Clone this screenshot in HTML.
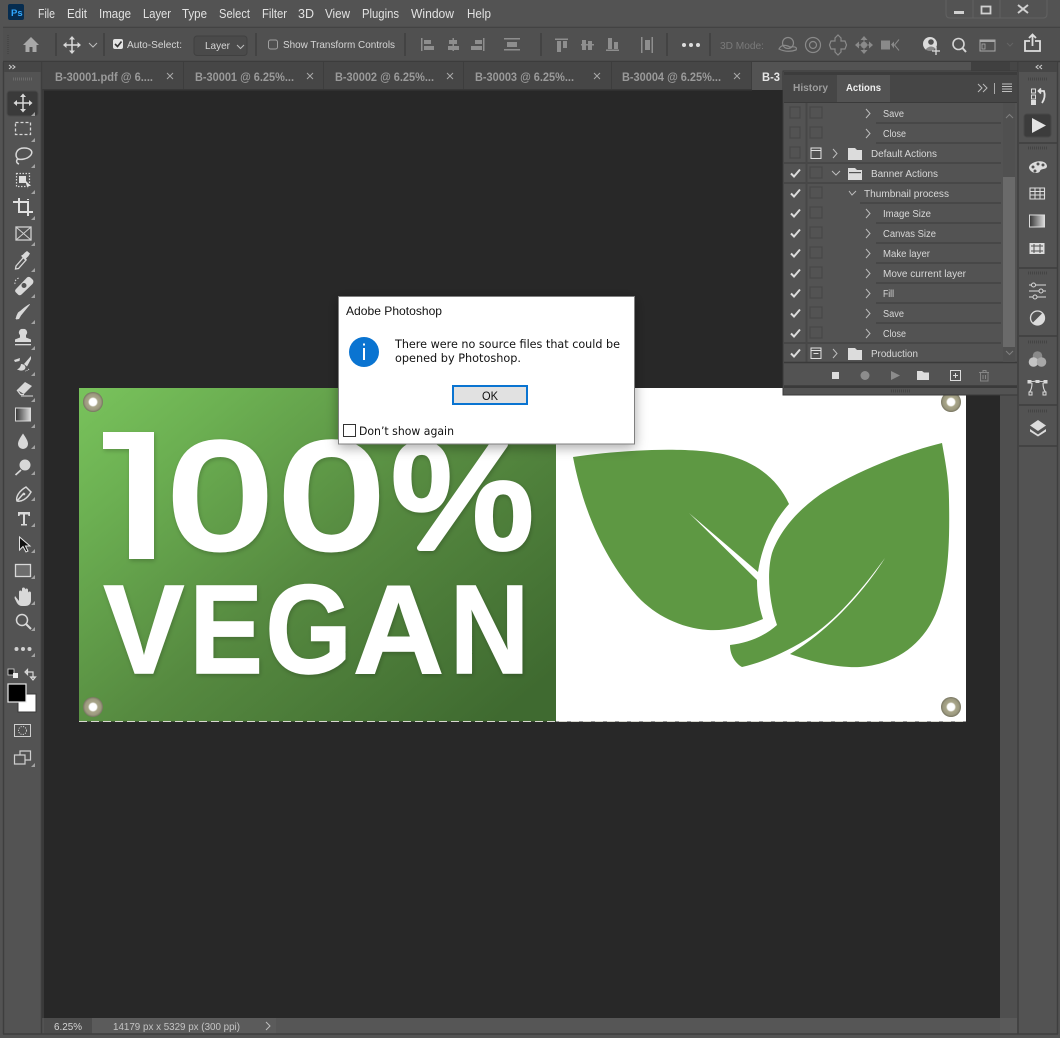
<!DOCTYPE html>
<html lang="en"><head><meta charset="utf-8"><title>Adobe Photoshop</title>
<style>
html,body{margin:0;padding:0;background:#535353;width:1060px;height:1038px;overflow:hidden}
svg{display:block;font-family:"Liberation Sans",sans-serif}
.m{font-size:12.5px;fill:#e2e2e2}
.o{font-size:10.5px;fill:#d6d6d6}
.t{font-size:11.5px;fill:#9a9a9a;font-weight:bold}
.a{font-size:10px;fill:#d8d8d8}
.d{font-size:12px;fill:#111}
.dv{font-size:11.5px;fill:#111;font-family:"DejaVu Sans",sans-serif}
.big{fill:#fff;stroke:#fff;stroke-linejoin:round}
.bg{fill:#fff;font-weight:bold;stroke:#fff;stroke-width:1.500px}
.ic{fill:none;stroke:#d8d8d8;stroke-width:1.5}
.fi{fill:#d8d8d8}
.sep{stroke:#3f3f3f;stroke-width:1.5}
.rl{stroke:#474747;stroke-width:2}
.bx{fill:none;stroke:#474747;stroke-width:1.2}
.ch{fill:none;stroke:#dcdcdc;stroke-width:2}
.cv{fill:none;stroke:#bdbdbd;stroke-width:1}
</style></head><body>
<svg width="1060" height="1038" viewBox="0 0 1060 1038" xmlns="http://www.w3.org/2000/svg">
<defs>
<linearGradient id="bn" x1="0" y1="0" x2="1" y2="0.85"><stop offset="0" stop-color="#79c35c"/><stop offset=".2" stop-color="#6cb052"/><stop offset=".55" stop-color="#568a40"/><stop offset="1" stop-color="#3f6a30"/></linearGradient>
<radialGradient id="rv"><stop offset="0" stop-color="#fff"/><stop offset=".36" stop-color="#fff"/><stop offset=".5" stop-color="#a8a588"/><stop offset=".8" stop-color="#9c997f"/><stop offset="1" stop-color="#75735f"/></radialGradient>
<linearGradient id="gr" x1="0" x2="1" y1="0" y2="0"><stop offset="0" stop-color="#333"/><stop offset="1" stop-color="#ddd"/></linearGradient>
<filter id="sh" x="-10%" y="-15%" width="120%" height="130%"><feDropShadow dx="0" dy="3" stdDeviation="6" flood-color="#000" flood-opacity=".35"/></filter>
<filter id="ts" filterUnits="userSpaceOnUse" x="79" y="388" width="477" height="334"><feDropShadow dx="1" dy="2" stdDeviation="2" flood-color="#000" flood-opacity=".2"/></filter>
<clipPath id="one"><rect x="129" y="432" width="25" height="127"/></clipPath>
</defs>

<rect width="1060" height="1038" fill="#535353"/>
<!-- canvas -->
<rect x="44" y="90" width="956" height="928" fill="#282828"/>
<rect x="1000" y="90" width="17" height="928" fill="#4f4f4f"/>
<!-- menu -->
<rect x="8" y="4" width="16" height="16" rx="2" fill="#062c4f"/>
<text x="11" y="16" font-size="9.5" font-weight="bold" fill="#31a8ff">Ps</text>
<g class="m">
<text x="38" y="18" textLength="17" lengthAdjust="spacingAndGlyphs">File</text>
<text x="67" y="18" textLength="20" lengthAdjust="spacingAndGlyphs">Edit</text>
<text x="99" y="18" textLength="32" lengthAdjust="spacingAndGlyphs">Image</text>
<text x="143" y="18" textLength="28" lengthAdjust="spacingAndGlyphs">Layer</text>
<text x="182" y="18" textLength="25" lengthAdjust="spacingAndGlyphs">Type</text>
<text x="219" y="18" textLength="31" lengthAdjust="spacingAndGlyphs">Select</text>
<text x="262" y="18" textLength="25" lengthAdjust="spacingAndGlyphs">Filter</text>
<text x="298" y="18" textLength="16" lengthAdjust="spacingAndGlyphs">3D</text>
<text x="325" y="18" textLength="25" lengthAdjust="spacingAndGlyphs">View</text>
<text x="362" y="18" textLength="37" lengthAdjust="spacingAndGlyphs">Plugins</text>
<text x="411" y="18" textLength="43" lengthAdjust="spacingAndGlyphs">Window</text>
<text x="467" y="18" textLength="24" lengthAdjust="spacingAndGlyphs">Help</text>
</g>
<!-- window controls -->
<path d="M946 0V14Q946 18 950 18H1043Q1047 18 1047 14V0M973 0V18M1000 0V18" fill="none" stroke="#626262" stroke-width="1"/>
<rect x="954" y="11" width="10" height="3" fill="#d0d0d0"/>
<rect x="981.500" y="6.500" width="9" height="7" fill="none" stroke="#d0d0d0" stroke-width="1.800"/>
<path d="M1018 5L1028 13M1028 5L1018 13" stroke="#d0d0d0" stroke-width="2"/>
<!-- options bar -->
<path d="M3 27.500H1060" stroke="#434343" stroke-width="1.500"/>
<rect x="3" y="28" width="1057" height="33" fill="#505050"/>
<path d="M3 61.500H1060" stroke="#3c3c3c" stroke-width="1.500"/>
<path d="M8 35V55" stroke="#474747" stroke-width="2" stroke-dasharray="1 1"/>
<path d="M23 45L31 37L39 45H36.500V52H32.500V47H29.500V52H25.500V45Z" fill="#a8a8a8"/>
<path class="sep" d="M56 33V56M104 33V56M256 33V56M405 33V56M541 33V56M667 33V56M710 33V56"/>
<g id="mv"><path class="ic" d="M65 45H79M72 38V52"/><path class="fi" d="M72 36L75 39.500H69ZM72 54L75 50.500H69ZM63 45L66.500 42V48ZM81 45L77.500 42V48Z"/></g>
<path class="cv" d="M89 43L93 47L97 43"/>
<rect x="113" y="39" width="10" height="10" rx="2" fill="#e3e3e3"/><path d="M115 44L117.500 46.500L121.500 41.500" fill="none" stroke="#333" stroke-width="1.600"/>
<text class="o" x="127" y="48" textLength="55" lengthAdjust="spacingAndGlyphs">Auto-Select:</text>
<rect x="194" y="36" width="53" height="19.500" rx="3" fill="#4a4a4a" stroke="#404040"/>
<text class="o" x="205" y="49" textLength="25" lengthAdjust="spacingAndGlyphs">Layer</text>
<path class="cv" d="M237 45L240.500 48.500L244 45"/>
<rect x="268.500" y="40" width="9" height="9" rx="2" fill="none" stroke="#a0a0a0"/>
<text class="o" x="283" y="48" textLength="112" lengthAdjust="spacingAndGlyphs">Show Transform Controls</text>
<!-- align icons -->
<g fill="#8e8e8e">
<rect x="421" y="38" width="1.500" height="13"/><rect x="424" y="40" width="7" height="4"/><rect x="424" y="46" width="10" height="4"/>
<rect x="452.500" y="38" width="1.500" height="13"/><rect x="449" y="40" width="8" height="4"/><rect x="448" y="46" width="11" height="4"/>
<rect x="483" y="38" width="1.500" height="13"/><rect x="475" y="40" width="7" height="4"/><rect x="471" y="46" width="11" height="4"/>
<rect x="504" y="38" width="16" height="1.500"/><rect x="507" y="42" width="10" height="5"/><rect x="504" y="49" width="16" height="1.500"/>
<rect x="555" y="38.500" width="13" height="1.500"/><rect x="557" y="41" width="4" height="11"/><rect x="563" y="41" width="4" height="7"/>
<rect x="581" y="44" width="13" height="1.500"/><rect x="582" y="40" width="4" height="10"/><rect x="588" y="41" width="4" height="9"/>
<rect x="606" y="49.500" width="13" height="1.500"/><rect x="608" y="38" width="4" height="11"/><rect x="614" y="42" width="4" height="7"/>
<rect x="641" y="37" width="1.500" height="16"/><rect x="645" y="40" width="5" height="10"/><rect x="651.500" y="37" width="1.500" height="16"/>
</g>
<circle cx="684" cy="45" r="2" fill="#ddd"/><circle cx="691" cy="45" r="2" fill="#ddd"/><circle cx="698" cy="45" r="2" fill="#ddd"/>
<text x="720" y="49" font-size="10.500" fill="#7a7a7a" textLength="44" lengthAdjust="spacingAndGlyphs">3D Mode:</text>
<g fill="none" stroke="#8a8a8a" stroke-width="1.200">
<circle cx="788" cy="43" r="5.500"/><path d="M779 49Q782 43 790 47Q798 46 796 50Q787 53 779 49Z"/>
<circle cx="813" cy="45" r="7.500"/><circle cx="813" cy="45" r="3.500"/>
<path d="M835 41V38L838 35L841 38V41H845L846.500 45L845 49H841V52L838 55L835 52V49H831L829.500 45L831 41Z"/>
</g>
<g fill="#8a8a8a">
<path d="M855 45L859 41.500V48.500ZM873 45L869 41.500V48.500ZM864 36L860.500 40H867.500ZM864 54L860.500 50H867.500Z"/><circle cx="864" cy="45" r="3.200"/><path d="M858 45H870M864 39V51" stroke="#8a8a8a"/>
<rect x="881" y="40.500" width="9" height="9"/><path d="M891 44.500L894 41.500V48.500Z"/><path d="M899 39.500L894.500 45L899 50.500" fill="none" stroke="#8a8a8a"/>
</g>
<circle cx="930" cy="44" r="7" fill="#dcdcdc"/><circle cx="931" cy="42" r="2.800" fill="#505050"/><path d="M926 49Q931 44 936 49V51H926Z" fill="#505050" opacity=".6"/>
<path d="M932 51H940M936 47V55" stroke="#dcdcdc" stroke-width="1.300"/>
<circle cx="958.500" cy="44" r="5.500" fill="none" stroke="#d4d4d4" stroke-width="1.600"/><path d="M962.500 48L966 52" stroke="#d4d4d4" stroke-width="2"/>
<rect x="980" y="40" width="15" height="11" fill="none" stroke="#a8a8a8" stroke-width="1"/><rect x="980" y="40" width="15" height="2" fill="#a8a8a8"/><rect x="982" y="44" width="3" height="5" fill="none" stroke="#a8a8a8" stroke-width=".8"/>
<path d="M1007 43L1010 46L1013 43" fill="none" stroke="#646464"/>
<path d="M1030 41H1025V51H1040V41H1035M1032.500 46V35M1029 38L1032.500 34.500L1036 38" fill="none" stroke="#dedede" stroke-width="1.800"/>

<!-- tabs -->
<rect x="42" y="62" width="976" height="28" fill="#464646"/>
<path d="M183.500 62V90M323.500 62V90M463.500 62V90M611.500 62V90M751.500 62V90" stroke="#3d3d3d" stroke-width="1"/>
<rect x="752" y="62" width="219" height="28" fill="#535353"/>
<rect x="971" y="62" width="39" height="9" fill="#404040"/>
<rect x="42" y="89" width="710" height="1.500" fill="#383838"/>
<g class="t">
<text x="55" y="81" textLength="98" lengthAdjust="spacingAndGlyphs">B-30001.pdf @ 6....</text>
<text x="195" y="81" textLength="99" lengthAdjust="spacingAndGlyphs">B-30001 @ 6.25%...</text>
<text x="335" y="81" textLength="99" lengthAdjust="spacingAndGlyphs">B-30002 @ 6.25%...</text>
<text x="475" y="81" textLength="99" lengthAdjust="spacingAndGlyphs">B-30003 @ 6.25%...</text>
<text x="622" y="81" textLength="99" lengthAdjust="spacingAndGlyphs">B-30004 @ 6.25%...</text>
</g>
<text x="762" y="81" font-size="11.500" font-weight="bold" fill="#e6e6e6" textLength="18" lengthAdjust="spacingAndGlyphs">B-3</text>
<g stroke="#a8a8a8" stroke-width="1">
<path d="M167 73L173 79M173 73L167 79"/><path d="M307 73L313 79M313 73L307 79"/><path d="M447 73L453 79M453 73L447 79"/><path d="M594 73L600 79M600 73L594 79"/><path d="M734 73L740 79M740 73L734 79"/>
</g>

<!-- left toolbar -->
<rect x="0" y="62" width="3" height="976" fill="#535353"/>
<path d="M3.500 62V1034M41.500 62V1034" stroke="#3e3e3e" stroke-width="1.500"/>
<rect x="42" y="90" width="2" height="928" fill="#3a3a3a"/>
<rect x="4" y="62" width="37" height="10" fill="#464646"/>
<path d="M9 65L11.500 67L9 69M12.500 65L15 67L12.500 69" fill="none" stroke="#d0d0d0"/>
<path d="M13 79H32" stroke="#6b6b6b" stroke-width="3" stroke-dasharray="1 1"/>
<rect x="7" y="91" width="31" height="25" rx="3" fill="#3a3a3a" stroke="#4a4a4a"/>
<g>
<path class="ic" d="M15 103H31M23 95V111"/><path class="fi" d="M23 93.500L26 97H20ZM23 112.500L26 109H20ZM13.500 103L17 100V106ZM32.500 103L29 100V106Z"/>
<rect x="15.500" y="122.500" width="15" height="12" fill="none" stroke="#d8d8d8" stroke-width="1.300" stroke-dasharray="3 2"/>
<path class="ic" d="M18 159C14 156 16 148 24 148C31 148 34 152 30 156C27 159 21 160 18 159C16 160 16 163 19 164"/>
<rect x="16.500" y="173.500" width="13" height="13" fill="none" stroke="#d8d8d8" stroke-width="1.200" stroke-dasharray="1.500 1.500"/><rect x="19" y="176" width="7" height="7" fill="#e0e0e0"/><path d="M25 180L31 186L27 186L28 190Z" fill="#e4e4e4"/>
<path d="M13 202H19M19 198V212H33M33 212" fill="none" stroke="#e0e0e0" stroke-width="2"/><path d="M19 202H28V216M28 199V200" fill="none" stroke="#e0e0e0" stroke-width="2"/>
<rect x="16" y="227" width="15" height="13" fill="none" stroke="#d0d0d0" stroke-width="1.300"/><path d="M16 227L31 240M31 227L16 240" stroke="#d0d0d0" stroke-width="1"/>
<path d="M16 266L15.500 269L18.500 268.500L26 260L23.500 257.500Z" fill="none" stroke="#d8d8d8" stroke-width="1.300"/><path class="fi" d="M22.500 255L25 252.500L27 251L30 253.500L28.500 256L26 258.500L27 260L25 260L21.500 256.500V255Z"/>
<path class="fi" d="M16 289L27 277.500Q29 276 31 278L33 280Q34 282 32.500 284L21.500 294.500Q19.500 296 18 294.500L15.500 292Q14.500 290.500 16 289Z"/><circle cx="24" cy="285.500" r="2.500" fill="#535353"/><path d="M15 284A5 5 0 0 1 20 278" fill="none" stroke="#d8d8d8" stroke-dasharray="1.500 1.500"/>
<path class="fi" d="M29.500 304L19.500 313L17.500 319H15.500Q16.500 315 18 312.500Z M30 304.500L21 315.500L19 319L16 319.500C17.500 315 18 311 29.500 304Z"/>
<path class="fi" d="M23 329A3.500 3.500 0 0 1 26 335V337.500L31 339.500V342H15V339.500L20 337.500V335A3.500 3.500 0 0 1 23 329Z"/><rect x="15" y="344" width="16" height="1.300" fill="#d8d8d8"/>
<path class="fi" d="M31 356L24 364L27 366.500L31 359ZM21 364Q25 364 25.500 367.500Q25 371 20 370.500L17 369.500Q20.500 368 21 364Z"/><path d="M14 360L20 358L19.500 361L15 362Z" fill="#d8d8d8"/><path d="M29 369Q27 371 25 371" stroke="#d8d8d8" fill="none" stroke-dasharray="1 1"/>
<path d="M17 390L25 382L32 386L24 394Z" fill="#d8d8d8"/><path d="M17 390L20.500 394.500H24" fill="none" stroke="#d8d8d8" stroke-width="1.200"/><path d="M21 396H33" stroke="#d8d8d8"/>
<rect x="15.500" y="408" width="15" height="13" fill="url(#gr)" stroke="#d8d8d8"/>
<path class="fi" d="M23 433.500C20 438 18 441 18 444A5 5 0 0 0 28 444C28 441 26 438 23 433.500Z"/>
<circle cx="25" cy="465" r="5.500" fill="#d8d8d8"/><path d="M21 470L15.500 475" stroke="#d8d8d8" stroke-width="1.700"/>
<path class="ic" d="M17 501C15.500 497 19 491 26 487L31 492C27 499 21.500 502 17 501ZM17 501L24 493"/><circle cx="24" cy="494" r="1.300" fill="#d8d8d8"/>
<path class="fi" d="M18 512H30V516H28.500L28 514.500H25V524H27V525.500H21V524H23V514.500H20L19.500 516H18Z"/>
<path d="M19.500 537V550L23 546.500L26 552L28 551L25.500 546H30Z" fill="#111" stroke="#e4e4e4"/>
<rect x="15.500" y="564.500" width="15" height="12" fill="#6d6d6d" stroke="#d8d8d8" stroke-width="1.300"/>
<path class="fi" d="M15 596L19 601V592Q19 590.500 20.500 590.500T22 592V589Q22 587.500 23.500 587.500T25 589V590Q25 588.500 26.500 588.500T28 590V593Q28 591.500 29.500 591.500T31 593V600Q31 606 25 606H22Q19 606 17 603L14.500 598Z"/>
<circle cx="22" cy="620" r="5.500" fill="none" stroke="#d8d8d8" stroke-width="1.500"/><path d="M26 624L31 629" stroke="#d8d8d8" stroke-width="2"/>
<circle cx="16.500" cy="649" r="2" fill="#d0d0d0"/><circle cx="23" cy="649" r="2" fill="#d0d0d0"/><circle cx="29.500" cy="649" r="2" fill="#d0d0d0"/>
</g>
<g fill="#b8b8b8">
<path d="M35 116L35 112L31 116ZM35 142L35 138L31 142ZM35 168L35 164L31 168ZM35 194L35 190L31 194ZM35 220L35 216L31 220ZM35 246L35 242L31 246ZM35 272L35 268L31 272ZM35 298L35 294L31 298ZM35 324L35 320L31 324ZM35 350L35 346L31 350ZM35 376L35 372L31 376ZM35 402L35 398L31 402ZM35 428L35 424L31 428ZM35 449L35 445L31 449ZM35 475L35 471L31 475ZM35 501L35 497L31 501ZM35 527L35 523L31 527ZM35 553L35 549L31 553ZM35 579L35 575L31 579ZM35 605L35 601L31 605ZM35 631L35 627L31 631ZM35 657L35 653L31 657ZM35 767L35 763L31 767Z" opacity=".8"/>
</g>
<rect x="8" y="669" width="6" height="6" fill="#111" stroke="#ddd" stroke-width=".8"/><rect x="13" y="673" width="5" height="5" fill="#eee"/>
<path d="M26 672H33V678M25 672L27.500 669.500V674.500ZM33 680L30.500 677H35.500Z" fill="none" stroke="#d8d8d8" stroke-width="1.200"/>
<rect x="18" y="694" width="18" height="18" fill="#fff" stroke="#3a3a3a" stroke-width="1"/>
<rect x="8" y="684" width="18" height="18" fill="#000" stroke="#e8e8e8" stroke-width="1.200"/>
<rect x="14.500" y="724.500" width="16" height="12" fill="#505050" stroke="#cfcfcf"/><circle cx="22.500" cy="730.500" r="4" fill="none" stroke="#cfcfcf" stroke-dasharray="1.200 1.200"/>
<path d="M20 755V751H30.500V760H25M14.500 755H25V764H14.500Z" fill="none" stroke="#cfcfcf" stroke-width="1.200"/>

<!-- banner -->
<rect x="79" y="388" width="477" height="333.500" fill="url(#bn)"/>
<rect x="556" y="388" width="410" height="333.500" fill="#fff"/>
<path d="M79 721.500H966" stroke="#d8d8d0" stroke-width="1" stroke-dasharray="8 4"/>
<g filter="url(#ts)">
<rect x="103" y="432" width="51" height="17" fill="#fff"/>
<g clip-path="url(#one)"><text class="big" x="91.800" y="555" font-size="168" stroke-width="11">1</text></g>
<g class="big" stroke-width="7" font-size="150">
<text transform="translate(170 547.500) scale(1.2 1)">0</text>
<text transform="translate(281 547.500) scale(1.21 1)">0</text>
</g>
<text class="big" stroke-width="6" font-size="150" transform="translate(391 548) scale(1.07 1)">%</text>
<g class="bg" font-size="126">
<text transform="translate(103.500 673) scale(.96 1)">V</text>
<text transform="translate(189.600 673) scale(.87 1)">E</text>
<text transform="translate(265.500 673) scale(.88 1)">G</text>
<text transform="translate(353 673) scale(1 1)">A</text>
<text transform="translate(450 673) scale(.87 1)">N</text>
</g>
</g>
<path fill="#5e9843" d="M573 457C620 450 690 446 727 455C758 463 778 480 789 504C773 522 762 545 758 572L689 513L757 580C757 595 759 607 763 619C745 627 725 631 708 630C680 628 655 615 638 597C610 566 585 520 573 457Z"/>
<path fill="#5e9843" d="M942 443C905 452 860 470 827 490C800 507 780 530 772 553C766 575 770 605 777 625C765 636 748 643 730 645C730 655 735 663 742 667C765 662 790 650 810 637C840 617 865 585 885 558C865 590 830 630 790 654C815 663 840 668 860 667C890 665 915 650 930 625C948 595 950 550 949 500C949 480 945 460 942 443Z"/>
<g>
<circle cx="93" cy="402" r="10" fill="url(#rv)"/><circle cx="951" cy="402" r="10" fill="url(#rv)"/><circle cx="93" cy="707" r="10" fill="url(#rv)"/><circle cx="951" cy="707" r="10" fill="url(#rv)"/>
</g>

<!-- dialog -->
<rect x="338.500" y="296.500" width="296" height="147.500" fill="#fff" stroke="#808080" filter="url(#sh)"/>
<text class="d" x="346" y="315" textLength="96" lengthAdjust="spacingAndGlyphs">Adobe Photoshop</text>
<circle cx="364" cy="352" r="15" fill="#0a74d1"/><rect x="363" y="348" width="2" height="12" fill="#fff"/><rect x="363" y="343.500" width="2" height="2" fill="#fff"/>
<text class="dv" x="395" y="348" textLength="225" lengthAdjust="spacingAndGlyphs">There were no source files that could be</text>
<text class="dv" x="395" y="362" textLength="126" lengthAdjust="spacingAndGlyphs">opened by Photoshop.</text>
<rect x="453" y="386" width="74" height="18" fill="#e1e1e1" stroke="#0a74d1" stroke-width="2"/>
<text class="d" x="482" y="400" textLength="16" lengthAdjust="spacingAndGlyphs">OK</text>
<rect x="343.500" y="424.500" width="12" height="12" fill="#fff" stroke="#333"/>
<text class="dv" x="359" y="435" textLength="95" lengthAdjust="spacingAndGlyphs">Don’t show again</text>

<!-- actions panel -->
<rect x="783" y="71" width="235" height="324" fill="#535353" stroke="#3a3a3a" stroke-width="1"/>
<rect x="784" y="72" width="233" height="3" fill="#3c3c3c"/>
<rect x="784" y="75" width="233" height="27" fill="#464646"/>
<rect x="837" y="75" width="53" height="27" fill="#535353"/>
<path d="M784 102.500H1017" stroke="#3a3a3a"/>
<text x="793" y="91" font-size="10" font-weight="bold" fill="#9d9d9d" textLength="35" lengthAdjust="spacingAndGlyphs">History</text>
<text x="846" y="91" font-size="10" font-weight="bold" fill="#efefef" textLength="35" lengthAdjust="spacingAndGlyphs">Actions</text>
<path d="M978 84L982 88L978 92M983 84L987 88L983 92" fill="none" stroke="#bbb"/>
<path d="M994.500 83V94" stroke="#aaa"/>
<path d="M1002 84H1012M1002 86.500H1012M1002 89H1012M1002 91.500H1012" stroke="#c0c0c0"/>
<!-- row lines -->
<g class="rl">
<path d="M876 123H1001M876 143H1001M784 163H1001M784 183H1001M860 203H1001M876 223H1001M876 243H1001M876 263H1001M876 283H1001M876 303H1001M876 323H1001M784 343H1001"/>
<path d="M806.500 103V363"/>
</g>
<path d="M784 362.500H1017M784 386H1017" stroke="#3a3a3a" stroke-width="1.500"/>
<!-- col boxes -->
<g class="bx">
<path d="M790 107h10v11h-10zM810 107h12v11h-12zM790 127h10v11h-10zM810 127h12v11h-12zM790 147h10v11h-10zM810 167h12v11h-12zM810 187h12v11h-12zM810 207h12v11h-12zM810 227h12v11h-12zM810 247h12v11h-12zM810 267h12v11h-12zM810 287h12v11h-12zM810 307h12v11h-12zM810 327h12v11h-12z"/>
</g>
<rect x="811" y="148" width="10" height="10.500" fill="none" stroke="#e0e0e0"/><path d="M811 150.500H821" stroke="#e0e0e0"/>
<rect x="811" y="348" width="10" height="10.500" fill="none" stroke="#e0e0e0"/><path d="M811 350.500H821M813.500 353.500H818.500" stroke="#e0e0e0"/>
<g class="ch">
<path d="M791 173.500L794 176.500L800 169.500M791 193.500L794 196.500L800 189.500M791 213.500L794 216.500L800 209.500M791 233.500L794 236.500L800 229.500M791 253.500L794 256.500L800 249.500M791 273.500L794 276.500L800 269.500M791 293.500L794 296.500L800 289.500M791 313.500L794 316.500L800 309.500M791 333.500L794 336.500L800 329.500M791 353.500L794 356.500L800 349.500"/>
</g>
<g class="cv">
<path d="M866 109L870 113.500L866 118M866 129L870 133.500L866 138M866 209L870 213.500L866 218M866 229L870 233.500L866 238M866 249L870 253.500L866 258M866 269L870 273.500L866 278M866 289L870 293.500L866 298M866 309L870 313.500L866 318M866 329L870 333.500L866 338"/>
<path d="M833 149L837 153.500L833 158M833 349L837 353.500L833 358"/>
<path d="M832 171L836 175L840 171M849 191L852 195L856 191" />
</g>
<path fill="#dcdcdc" d="M848 148H855L857 150H862V160H848Z"/>
<path fill="#dcdcdc" d="M848 168H855L857 170H862V180H848Z"/><rect x="849" y="172" width="12" height="1.200" fill="#535353"/>
<path fill="#dcdcdc" d="M848 348H855L857 350H862V360H848Z"/>
<g class="a">
<text x="883" y="117" textLength="21" lengthAdjust="spacingAndGlyphs">Save</text>
<text x="883" y="137" textLength="23" lengthAdjust="spacingAndGlyphs">Close</text>
<text x="871" y="157" textLength="66" lengthAdjust="spacingAndGlyphs">Default Actions</text>
<text x="871" y="177" textLength="67" lengthAdjust="spacingAndGlyphs">Banner Actions</text>
<text x="864" y="197" textLength="85" lengthAdjust="spacingAndGlyphs">Thumbnail process</text>
<text x="883" y="217" textLength="48" lengthAdjust="spacingAndGlyphs">Image Size</text>
<text x="883" y="237" textLength="53" lengthAdjust="spacingAndGlyphs">Canvas Size</text>
<text x="883" y="257" textLength="47" lengthAdjust="spacingAndGlyphs">Make layer</text>
<text x="883" y="277" textLength="83" lengthAdjust="spacingAndGlyphs">Move current layer</text>
<text x="883" y="297" textLength="11" lengthAdjust="spacingAndGlyphs">Fill</text>
<text x="883" y="317" textLength="21" lengthAdjust="spacingAndGlyphs">Save</text>
<text x="883" y="337" textLength="23" lengthAdjust="spacingAndGlyphs">Close</text>
<text x="871" y="357" textLength="47" lengthAdjust="spacingAndGlyphs">Production</text>
</g>
<!-- scrollbar -->
<rect x="1003" y="103" width="12" height="259" fill="#505050"/>
<rect x="1003" y="177" width="12" height="170" fill="#6a6a6a"/>
<path d="M1006 118L1009.500 114.500L1013 118M1006 351L1009.500 354.500L1013 351" fill="none" stroke="#808080"/>
<!-- panel bottom -->
<rect x="832" y="372" width="7" height="7" fill="#dcdcdc"/>
<circle cx="865" cy="375.500" r="4.500" fill="#8c8c8c"/>
<path d="M891 371V380L900 375.500Z" fill="#8c8c8c"/>
<path d="M917 371H922L924 372.500H929V380H917Z" fill="#dcdcdc"/>
<rect x="950.500" y="370.500" width="10" height="10" fill="none" stroke="#dcdcdc"/><path d="M953 375.500H958M955.500 373V378" stroke="#dcdcdc"/>
<path d="M979 372.500H989M983 372.500V370.500H986V372.500M980.500 373V381H988V373M983 375V379M985.500 375V379" fill="none" stroke="#868686"/>
<rect x="784" y="386" width="233" height="2" fill="#3a3a3a"/>
<path d="M891 391H911" stroke="#444" stroke-width="3" stroke-dasharray="1 1"/>

<!-- right dock -->
<path d="M1018 62V1034M1057.500 62V1034" stroke="#3e3e3e" stroke-width="1.500"/>
<rect x="1019" y="62" width="38" height="10" fill="#464646"/>
<path d="M1042 65L1039.500 67L1042 69M1038.500 65L1036 67L1038.500 69" fill="none" stroke="#d0d0d0"/>
<path d="M1028 79H1047M1028 148H1047M1028 273H1047M1028 342H1047M1028 411H1047" stroke="#3f3f3f" stroke-width="3" stroke-dasharray="1 1" opacity=".7"/>
<path d="M1019 143H1057M1019 268H1057M1019 336H1057M1019 405H1057M1019 446H1057" stroke="#3e3e3e" stroke-width="1.500"/>
<rect x="1031.500" y="89" width="4" height="4" fill="none" stroke="#dcdcdc"/><rect x="1031.500" y="95" width="4" height="4" fill="none" stroke="#dcdcdc"/><rect x="1031" y="100" width="5" height="5" fill="#dcdcdc"/>
<path d="M1039 91H1044Q1046 97 1042 103M1041 88.500L1038.500 91L1041 93.500" fill="none" stroke="#e0e0e0" stroke-width="1.800"/>
<rect x="1024" y="114" width="27" height="23" rx="3" fill="#3c3c3c" stroke="#474747"/>
<path d="M1032 118V133L1046 125.500Z" fill="#e4e4e4"/>
<path d="M1029 168C1029 161 1046 158 1047 166C1047 170 1041 168 1040 171C1039 174 1031 174 1029 168Z" fill="#dcdcdc"/><circle cx="1033" cy="167" r="1.500" fill="#505050"/><circle cx="1038" cy="164" r="1.500" fill="#505050"/><circle cx="1043" cy="165" r="1.500" fill="#505050"/><circle cx="1035" cy="171" r="1.500" fill="#505050"/>
<path d="M1030 188H1044.500V199H1030ZM1030 191.500H1044.500M1030 195H1044.500M1035 188V199M1040 188V199" fill="none" stroke="#dcdcdc" stroke-width="1.100"/>
<rect x="1029.500" y="215" width="15" height="12" fill="url(#gr)" stroke="#dcdcdc"/>
<rect x="1029.500" y="243" width="15" height="11" fill="#dcdcdc"/><path d="M1031 246H1043M1031 251H1043M1034 244V253M1040 244V253" stroke="#505050"/>
<path d="M1029 285H1046M1029 291H1046M1029 297H1046" stroke="#d8d8d8"/><circle cx="1033.500" cy="285" r="2" fill="#505050" stroke="#d8d8d8"/><circle cx="1041" cy="291" r="2" fill="#505050" stroke="#d8d8d8"/><circle cx="1035" cy="297" r="2" fill="#505050" stroke="#d8d8d8"/>
<circle cx="1037.500" cy="318" r="7" fill="#535353" stroke="#dcdcdc" stroke-width="1.300"/><path d="M1042.500 313A7 7 0 0 1 1032.500 323Z" fill="#dcdcdc"/>
<circle cx="1037.500" cy="356" r="4.800" fill="#8a8a8a"/><circle cx="1033.500" cy="362" r="4.800" fill="#c4c4c4"/><circle cx="1041.500" cy="362" r="4.800" fill="#a8a8a8"/>
<path d="M1029 382L1037 381L1046 382M1032 383Q1032 389 1029.500 392M1043 383Q1043 389 1045.500 392" fill="none" stroke="#d8d8d8" stroke-width="1.100"/><rect x="1027.500" y="380" width="4" height="3.500" fill="#d8d8d8"/><rect x="1043.500" y="380" width="4" height="3.500" fill="#d8d8d8"/><rect x="1035.500" y="380" width="4" height="3" fill="#d8d8d8"/><rect x="1029" y="392" width="3" height="3" fill="none" stroke="#d8d8d8"/><rect x="1043" y="392" width="3" height="3" fill="none" stroke="#d8d8d8"/>
<path d="M1038 420L1046 425.500L1038 431L1030 425.500Z" fill="#dcdcdc"/><path d="M1030 429L1038 434.500L1046 429L1046 431.500L1038 436.500L1030 431.500Z" fill="#dcdcdc"/>

<!-- status bar -->
<rect x="44" y="1018" width="973" height="15.500" fill="#565656"/>
<rect x="44" y="1018" width="48" height="15.500" fill="#4c4c4c"/>
<rect x="92" y="1018" width="184" height="15.500" fill="#5b5b5b"/>
<rect x="1000" y="1018" width="17" height="15.500" fill="#5a5a5a"/>
<text x="54" y="1030" font-size="10.500" fill="#d4d4d4" textLength="28" lengthAdjust="spacingAndGlyphs">6.25%</text>
<text x="113" y="1030" font-size="10.500" fill="#c4c4c4" textLength="127" lengthAdjust="spacingAndGlyphs">14179 px x 5329 px (300 ppi)</text>
<path d="M266 1022L270 1026L266 1030" fill="none" stroke="#bdbdbd"/>
<path d="M3 1034H1058" stroke="#3e3e3e" stroke-width="1.500"/>
</svg>
</body></html>
